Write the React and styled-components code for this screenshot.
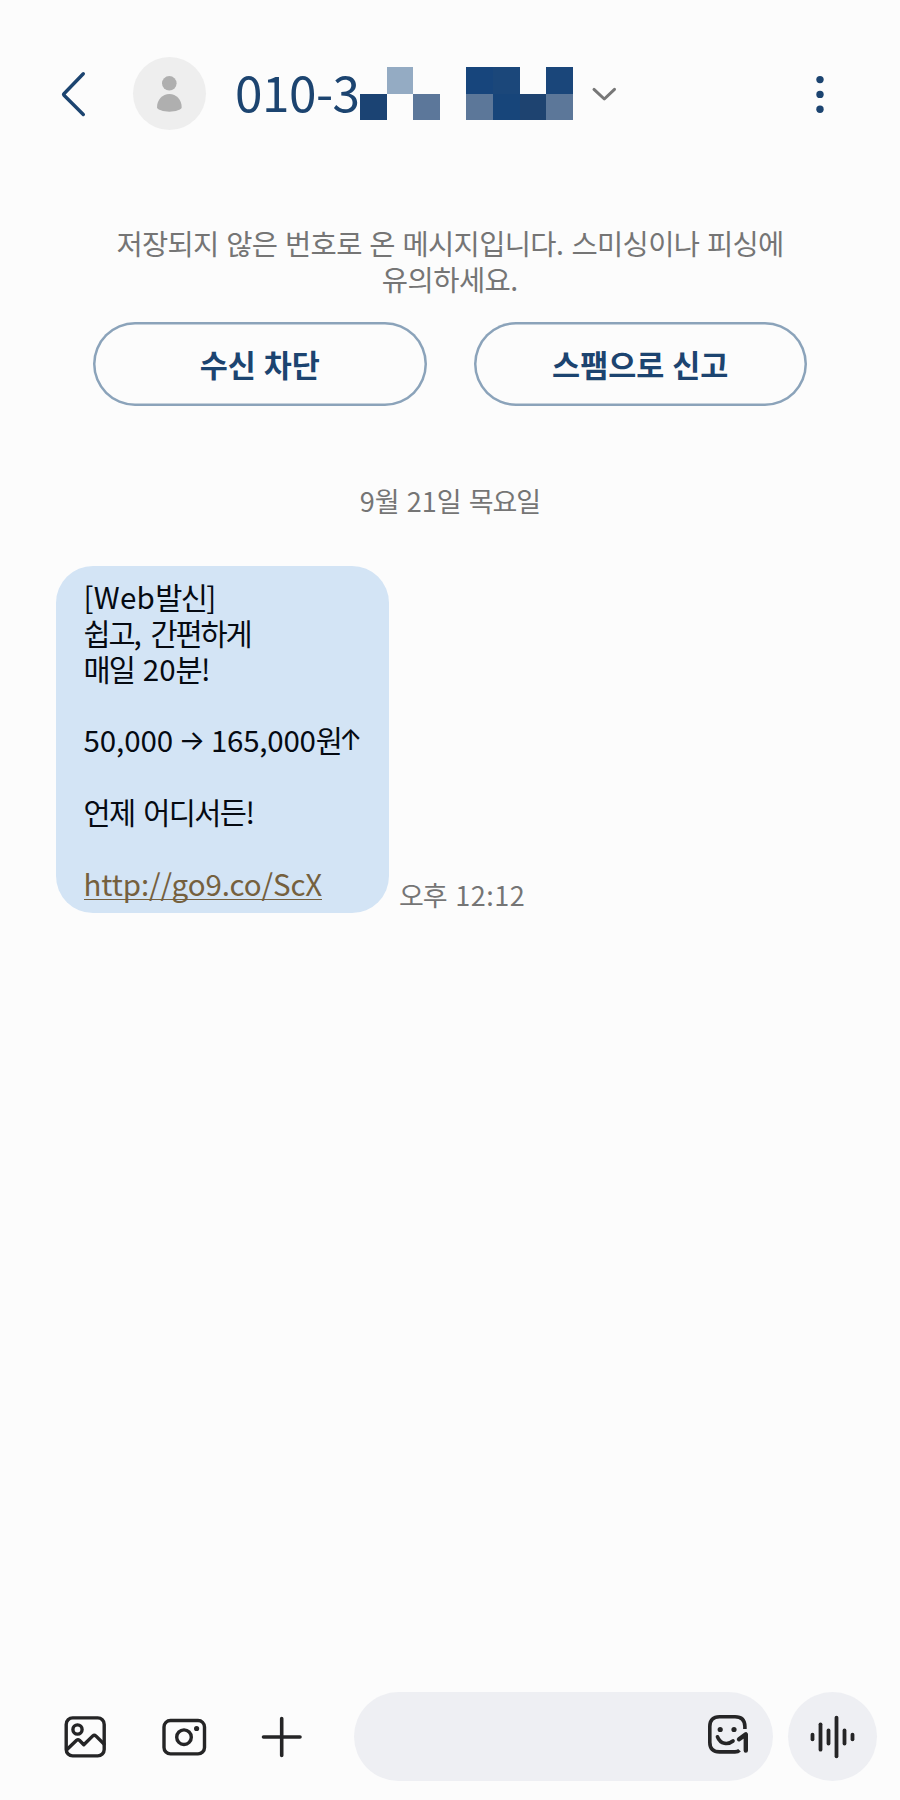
import React from "react";
import styled, { createGlobalStyle } from "styled-components";

const navy = "#1c4470";
const ink = "#252526";

const GlobalStyle = createGlobalStyle`
  * { box-sizing: border-box; }
  body { margin: 0; background: #fcfcfc; }
  svg { display: block; flex: none; overflow: visible; }
`;

const Screen = styled.div`
  width: 900px;
  height: 1800px;
  display: flex;
  flex-direction: column;
  background: #fcfcfc;
  color: #050a12;
  font-family: "Noto Sans CJK KR", sans-serif;
  overflow: hidden;
`;

const Header = styled.header`
  height: 187px;
  padding: 0 60px 0 61px;
  display: flex;
  align-items: center;
`;

const Avatar = styled.div`
  width: 73px;
  height: 73px;
  margin-left: 47px;
  border-radius: 50%;
  background: #eeeeee;
  display: flex;
  align-items: center;
  justify-content: center;
`;

const Phone = styled.h1`
  width: 127px;
  margin: 0 0 0 27px;
  padding: 0 0 6px 2px;
  font-size: 49.5px;
  font-weight: 400;
  line-height: 60px;
  letter-spacing: -0.5px;
  color: ${navy};
  white-space: nowrap;
`;

const Mosaic = styled.div`
  display: grid;
  grid-template: repeat(2, 26.7px) / repeat(8, 26.6px);
`;

const Cell = styled.i`
  background: ${(p) => p.$tone};
`;

const Spacer = styled.div`
  flex: 1;
`;

const Notice = styled.p`
  margin: 38px 0 0;
  text-align: center;
  font-size: 28.5px;
  line-height: 36px;
  word-spacing: 1.2px;
  color: #757575;
`;

const Actions = styled.div`
  margin: 25px 93px 0;
  display: grid;
  grid-template-columns: 1fr 1fr;
  gap: 47px;
`;

const ActionButton = styled.button`
  height: 84px;
  padding: 0;
  border: 0;
  box-shadow: inset 0 0 0 2.5px #8ba3ba;
  border-radius: 42px;
  background: transparent;
  color: ${navy};
  font: 700 30.5px "Noto Sans CJK KR", sans-serif;
  word-spacing: 1px;
`;

const DateLabel = styled.div`
  margin-top: 77px;
  text-align: center;
  font-size: 27px;
  line-height: 36px;
  word-spacing: 2px;
  color: #757575;
`;

const MessageRow = styled.div`
  margin: 47px 0 0 56px;
  display: flex;
  align-items: flex-end;
`;

const Bubble = styled.div`
  width: 333px;
  height: 347px;
  padding: 13px 0 0 27.5px;
  border-radius: 37px;
  background: #d3e4f5;
  font-size: 29.5px;
  line-height: 35.85px;
  word-spacing: 2px;
  white-space: nowrap;
`;

const Line = styled.div`
  height: 35.85px;
  display: flex;
  align-items: baseline;
  white-space: pre;
`;

const Arrow = styled.span`
  width: ${(p) => p.$width}px;
  margin-bottom: -1px;
  align-self: flex-end;
  display: flex;
  justify-content: center;
  font-family: Inter, sans-serif;
  font-size: ${(p) => p.$size}px;
`;

const Link = styled.a`
  height: 34px;
  align-self: flex-start;
  border-bottom: 1.5px solid #75603e;
  color: #75603e;
  line-height: 35px;
  letter-spacing: -0.1px;
`;

const Time = styled.span`
  margin: 0 0 0 10px;
  font-size: 27px;
  line-height: 36px;
  word-spacing: 2px;
  color: #757575;
`;

const Run = styled.span`
  letter-spacing: ${(p) => p.$track}px;
`;

const Footer = styled.footer`
  height: 108px;
  padding: 0 23px 19px 64px;
  display: flex;
  align-items: center;
`;

const Tools = styled.div`
  width: 290px;
  display: flex;
  align-items: center;
`;

const Tool = styled.div`
  margin-right: ${(p) => p.$after}px;
`;

const Field = styled.div`
  width: 419px;
  height: 89px;
  padding: 0 24px 2px 0;
  border-radius: 45px;
  background: #eeeff3;
  display: flex;
  align-items: center;
  justify-content: flex-end;
`;

const VoiceButton = styled.div`
  width: 89px;
  height: 89px;
  margin-left: 14.5px;
  padding-left: 1px;
  border-radius: 50%;
  background: #eeeff3;
  display: flex;
  align-items: center;
  justify-content: center;
`;

const clear = "transparent";
const cells = [
  clear, "#94abc3", clear, clear, "#17457c", "#1b477a", clear, "#1a467a",
  "#1b4373", clear, "#5c779a", clear, "#5c7799", "#17457a", "#1e4370", "#5c7799",
];

const stroke = { fill: "none", strokeLinecap: "round", strokeLinejoin: "round" };

/* Hangul and Latin runs are tracked separately. */
function Mixed({ text, hangul = 0, latin = 0 }) {
  return text
    .split(/([\uac00-\ud7a3]+)/)
    .filter(Boolean)
    .map((part, i) => (
      <Run key={i} $track={/[\uac00-\ud7a3]/.test(part) ? hangul : latin}>{part}</Run>
    ));
}

const bars = [
  [2.5, 2.3], [10.5, 12.7], [18.5, 6.5], [26.5, 19.3], [34.5, 6.5], [42.5, 2.3],
];

export default function App() {
  return (
    <Screen>
      <GlobalStyle />
      <Header>
        <svg width="25" height="46" viewBox="0 0 25 46" {...stroke} stroke={navy} strokeWidth="3.4">
          <path d="M22.3 2.7 3 22.8Q2.3 23.5 3 24.2L22.3 43.5" />
        </svg>
        <Avatar>
          <svg width="26" height="38" viewBox="0 0 26 38" fill="#afafaf">
            <circle cx="12.3" cy="8.3" r="7.3" />
            <path d="M0 32.5C0 24.5 5.5 19 12.4 19s12.3 5.5 12.3 13.5c0 2-6.3 4.2-12.3 4.2S0 34.5 0 32.5Z" />
          </svg>
        </Avatar>
        <Phone>010-3</Phone>
        <Mosaic>
          {cells.map((tone, i) => <Cell key={i} $tone={tone} />)}
        </Mosaic>
        <svg width="62" height="14" viewBox="0 0 62 14" {...stroke} stroke="#777" strokeWidth="3">
          <path d="M21 2.4 31.3 12 41.5 2.4" />
        </svg>
        <Spacer />
        <svg width="40" height="40" viewBox="0 0 40 40" fill={navy}>
          <circle cx="20" cy="5.6" r="3.7" />
          <circle cx="20" cy="20.4" r="3.7" />
          <circle cx="20" cy="35.2" r="3.7" />
        </svg>
      </Header>

      <Notice>
        <Mixed text="저장되지 않은 번호로 온 메시지입니다. 스미싱이나 피싱에" hangul={-0.65} />
        <br />
        <Mixed text="유의하세요." hangul={-0.5} />
      </Notice>
      <Actions>
        <ActionButton><Mixed text="수신 차단" hangul={-0.1} /></ActionButton>
        <ActionButton><Mixed text="스팸으로 신고" hangul={0} /></ActionButton>
      </Actions>

      <DateLabel><Mixed text="9월 21일 목요일" hangul={-1} /></DateLabel>
      <MessageRow>
        <Bubble>
          <Line><Mixed text="[Web발신]" hangul={-1.6} latin={0.3} /></Line>
          <Line><Mixed text="쉽고, 간편하게" hangul={-2.1} /></Line>
          <Line><Mixed text="매일 20분!" hangul={-1.8} /></Line>
          <Line />
          <Line>
            <Mixed text="50,000" latin={-0.1} />
            <Arrow $width={38} $size={28}>→</Arrow>
            <Mixed text="165,000원" hangul={-0.6} latin={-0.25} />
            <Arrow $width={17} $size={28}>↑</Arrow>
          </Line>
          <Line />
          <Line><Mixed text="언제 어디서든!" hangul={-1.6} /></Line>
          <Line />
          <Line><Link>http://go9.co/ScX</Link></Line>
        </Bubble>
        <Time><Mixed text="오후 12:12" hangul={-1} latin={0.5} /></Time>
      </MessageRow>

      <Spacer />
      <Footer>
        <Tools>
          <Tool $after={56}>
            <svg width="42" height="42" viewBox="0 0 42 42" {...stroke} stroke={ink} strokeWidth="3.4">
              <rect x="2.2" y="1.9" width="38" height="38" rx="6.5" />
              <circle cx="13.5" cy="13.5" r="4.6" />
              <path d="M3 33.5 12.6 24.3Q14 23.1 15.4 24.3L19.8 28.7 28.8 19.9Q30.3 18.5 31.8 19.9L40 28" />
            </svg>
          </Tool>
          <Tool $after={56}>
            <svg width="44" height="42" viewBox="0 0 44 42" {...stroke} stroke={ink} strokeWidth="3.4">
              <rect x="2" y="4.5" width="40.5" height="33.4" rx="6.5" />
              <circle cx="22" cy="21.2" r="7.3" />
              <circle cx="34.6" cy="12.5" r="2.6" fill={ink} stroke="none" />
            </svg>
          </Tool>
          <Tool $after={0}>
            <svg width="40" height="40" viewBox="0 0 40 40" {...stroke} stroke={ink} strokeWidth="3.6">
              <path d="M1.5 20H38M19.7 1.5V38.5" />
            </svg>
          </Tool>
        </Tools>
        <Field>
          <svg width="41" height="44" viewBox="0 0 41 44" {...stroke} stroke={ink} strokeWidth="3.6">
            <path d="M31.5 36.2Q30 37.9 27 37.9H11.5Q1.8 37.9 1.8 28.2V12.5Q1.8 2.8 11.5 2.8H27Q36.7 2.8 36.9 12.5V15" strokeLinecap="butt" />
            <circle cx="12.2" cy="15.5" r="2.6" fill={ink} stroke="none" />
            <circle cx="26" cy="15.5" r="2.6" fill={ink} stroke="none" />
            <path d="M9.5 22.8C12.5 30.5 20 31 25 27" strokeWidth="3.7" />
            <path d="M31 25.2 37.8 20.4V36.5" strokeWidth="4.4" />
          </svg>
        </Field>
        <VoiceButton>
          <svg width="46" height="44" viewBox="0 0 46 44" {...stroke} stroke={ink} strokeWidth="3.8">
            {bars.map(([x, h]) => <path key={x} d={`M${x} ${22 - h}V${22 + h}`} />)}
          </svg>
        </VoiceButton>
      </Footer>
    </Screen>
  );
}
